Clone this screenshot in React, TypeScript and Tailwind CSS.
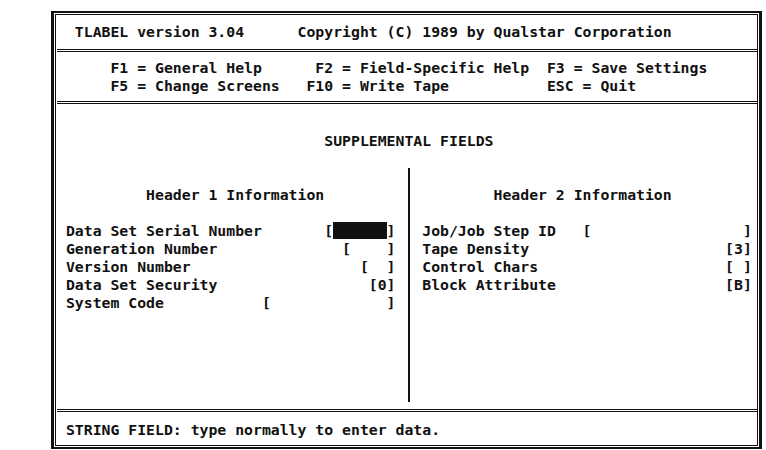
import React from "react";

// Qualstar TLABEL supplemental fields screen (80-column text mode look)

// builds a text-mode line: each part is placed at its screen column (col 1 = first cell)
const at = (start: number, parts: [number, string][]) => {
  let s = "";
  for (const [col, text] of parts) {
    s = s.padEnd(col - start, " ") + text;
  }
  return s;
};

const Row: React.FC<{ children?: React.ReactNode }> = ({ children }) => (
  <div className="h-[18px] leading-[18px] whitespace-pre">{children}</div>
);

const Separator = () => <div className="h-[3px] border-y border-[#111]" />;

const leftRows = [
  at(1, [[2, "Generation Number"], [33, "[    ]"]]),
  at(1, [[2, "Version Number"], [35, "[  ]"]]),
  at(1, [[2, "Data Set Security"], [36, "[0]"]]),
  at(1, [[2, "System Code"], [24, "["], [38, "]"]]),
];

const rightRows = [
  at(41, [[42, "Job/Job Step ID"], [60, "["], [78, "]"]]),
  at(41, [[42, "Tape Density"], [76, "[3]"]]),
  at(41, [[42, "Control Chars"], [76, "[ ]"]]),
  at(41, [[42, "Block Attribute"], [76, "[B]"]]),
];

export default function App() {
  return (
    <div
      className="w-[766px] h-[450px] bg-white pt-[11px] pl-[51px] text-[#111] font-bold text-[14.8px]"
      style={{ fontFamily: '"DejaVu Sans Mono", "Liberation Mono", monospace' }}
    >
      <div className="w-[711px] h-[438px] border-x-[3px] border-y-[2px] border-[#111] p-[1px]">
        <div className="h-full border border-[#111] flex flex-col pl-[1px]">
          {/* title */}
          <div className="h-[34px] pt-[8px]">
            <Row>
              {at(1, [[3, "TLABEL version 3.04"], [28, "Copyright (C) 1989 by Qualstar Corporation"]])}
            </Row>
          </div>
          <Separator />

          {/* function keys */}
          <div className="h-[49px] pt-[7px]">
            <Row>
              {at(1, [[7, "F1 = General Help"], [30, "F2 = Field-Specific Help"], [56, "F3 = Save Settings"]])}
            </Row>
            <Row>
              {at(1, [[7, "F5 = Change Screens"], [29, "F10 = Write Tape"], [56, "ESC = Quit"]])}
            </Row>
          </div>
          <Separator />

          {/* main */}
          <div className="h-[305px] pt-[28px]">
            <Row>{at(1, [[31, "SUPPLEMENTAL FIELDS"]])}</Row>
            <div className="flex mt-[18px] h-[234px]">
              <div className="w-[39ch] pt-[18px]">
                <Row>{at(1, [[11, "Header 1 Information"]])}</Row>
                <Row />
                <Row>
                  {at(1, [[2, "Data Set Serial Number"], [31, "["]])}
                  <span className="inline-block w-[6ch] h-[17px] bg-[#111] align-top" />
                  {"]"}
                </Row>
                {leftRows.map((r) => (
                  <Row key={r}>{r}</Row>
                ))}
              </div>
              <div className="w-[1ch] flex justify-center">
                <div className="w-[2px] h-full bg-[#111]" />
              </div>
              <div className="flex-1 pt-[18px]">
                <Row>{at(41, [[50, "Header 2 Information"]])}</Row>
                <Row />
                {rightRows.map((r) => (
                  <Row key={r}>{r}</Row>
                ))}
              </div>
            </div>
          </div>
          <Separator />

          {/* status */}
          <div className="flex-1 pt-[9px]">
            <Row>{at(1, [[2, "STRING FIELD: type normally to enter data."]])}</Row>
          </div>
        </div>
      </div>
    </div>
  );
}
